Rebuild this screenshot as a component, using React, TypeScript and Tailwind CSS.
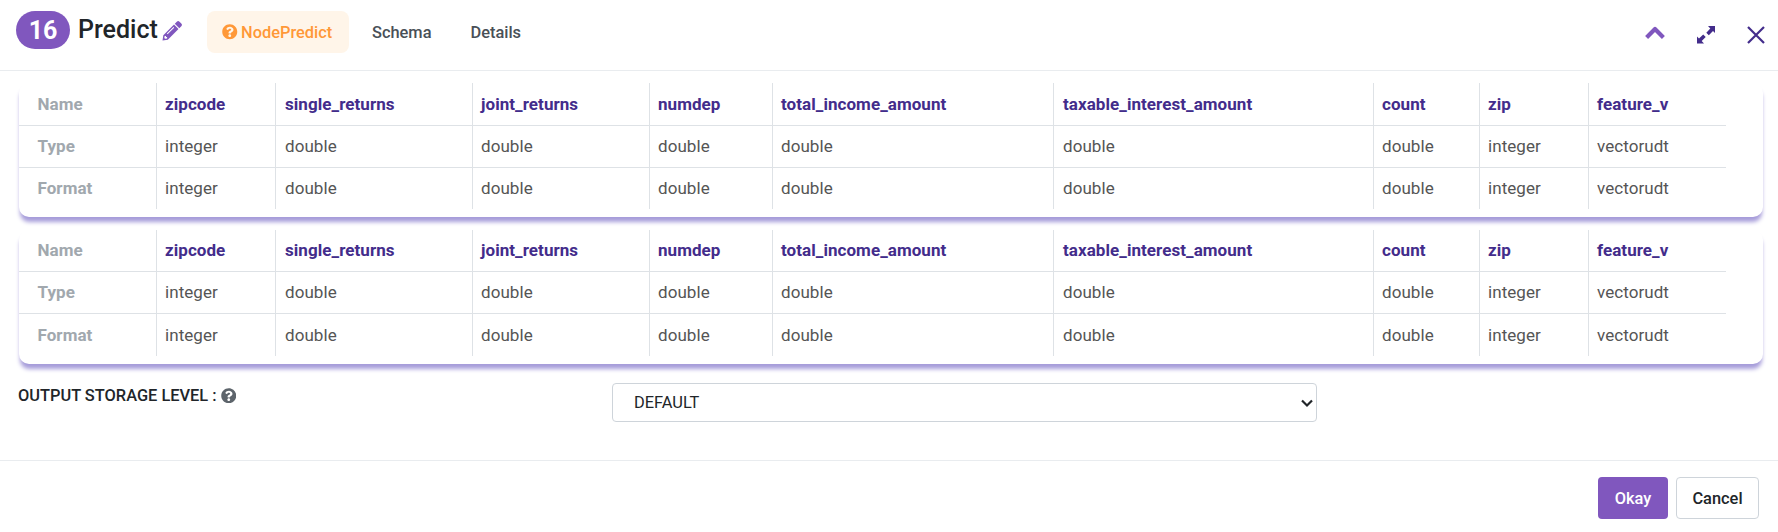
import React from "react";
import { FaQuestionCircle } from "react-icons/fa";

type Column = { name: string; type: string; format: string; pad: string };

const columns: Column[] = [
  { name: "zipcode", type: "integer", format: "integer", pad: "pl-2" },
  { name: "single_returns", type: "double", format: "double", pad: "pl-[9px]" },
  { name: "joint_returns", type: "double", format: "double", pad: "pl-2" },
  { name: "numdep", type: "double", format: "double", pad: "pl-2" },
  { name: "total_income_amount", type: "double", format: "double", pad: "pl-2" },
  { name: "taxable_interest_amount", type: "double", format: "double", pad: "pl-[9px]" },
  { name: "count", type: "double", format: "double", pad: "pl-2" },
  { name: "zip", type: "integer", format: "integer", pad: "pl-2" },
  { name: "feature_v", type: "vectorudt", format: "vectorudt", pad: "pl-2" },
];

const rows: { label: string; key: "name" | "type" | "format" }[] = [
  { label: "Name", key: "name" },
  { label: "Type", key: "type" },
  { label: "Format", key: "format" },
];

const inputRows = ["h-[43px] *:pt-[8.5px]", "h-[42px] *:pt-[7.5px]", "h-[41px] *:pt-[7.5px]"];
const outputRows = ["h-[42px] *:pt-[7.5px]", "h-[42px] *:pt-[7.5px]", "h-[42px] *:pt-[8.5px]"];

function SchemaTable({ rowClasses }: { rowClasses: string[] }) {
  return (
    <div className="h-[134px] rounded-[10px] bg-white text-[17px] leading-6 tracking-[0.06px] shadow-[0_5.5px_4px_-1px_#a69cda]">
      <div className="w-[1707px]">
        {rows.map((row, r) => (
          <div
            key={row.key}
            className={
              "grid grid-cols-[138px_119px_197px_177px_123px_281px_320px_106px_109px_137px] " + rowClasses[r]
            }
          >
            <div
              className={
                "border-r border-[#dee2e6] pl-[18.5px] font-bold text-[#a1a8ae] " + (r < 2 ? "border-b" : "")
              }
            >
              {row.label}
            </div>
            {columns.map((column, c) => (
              <div
                key={column.name}
                className={
                  "border-[#dee2e6] " +
                  column.pad +
                  (r < 2 ? " border-b" : "") +
                  (c < columns.length - 1 ? " border-r" : "") +
                  (row.key === "name" ? " font-bold text-[#432c8b]" : " text-[#555]")
                }
              >
                {column[row.key]}
              </div>
            ))}
          </div>
        ))}
      </div>
    </div>
  );
}

function PencilIcon() {
  return (
    <svg className="h-5 w-5" viewBox="0 0 20 20" fill="#8057be">
      <path
        fillRule="evenodd"
        d="M14.8 0.7a1.9 1.9 0 0 1 2.7 0l1.8 1.8a1.9 1.9 0 0 1 0 2.7L17.3 7.2 12.8 2.7ZM12 3.5 16.5 8 5.8 18.7 0.5 19.6 1.3 14.2ZM11.5 6 4.9 12.6 5.6 13.3 12.2 6.7ZM2.7 15 2.3 17l0.8 0.8 2-0.4v-1.3H4v-1.1Z"
      />
    </svg>
  );
}

export default function App() {
  return (
    <div className="flex h-[532px] flex-col bg-white font-[Roboto,sans-serif] text-[16.4px] leading-6 text-[#212529]">
      <header className="flex h-[71px] items-start border-b border-[#e9ecef] pl-4 pt-[11px]">
        <span className="flex h-[38px] w-[54px] items-center justify-center rounded-full bg-[#8057be] pt-px text-[25px] font-bold text-white">
          16
        </span>
        <h1 className="ml-2 flex h-[38px] w-[84px] items-center pb-px text-[25px] font-medium">Predict</h1>
        <span className="mt-[10px]">
          <PencilIcon />
        </span>
        <nav className="ml-[25px] flex h-[42px] items-center font-medium text-[#495057]">
          <a className="flex h-[42px] w-[142px] items-center gap-[3.5px] rounded-lg bg-[#fff5e9] pl-[15px] text-[#ff9838]">
            <FaQuestionCircle size={15.5} />
            <span className="pt-px">NodePredict</span>
          </a>
          <a className="ml-[23px] pt-px">Schema</a>
          <a className="ml-[39px] pt-px">Details</a>
        </nav>
        <div className="ml-auto flex items-start pr-[13px] pt-[15px]">
          <svg className="mr-[32px] h-[14px] w-[20px]" viewBox="0 0 20 14" fill="none" stroke="#8057be" strokeWidth="4.2">
            <path d="M1.6 11.4 10 3 18.4 11.4" strokeLinejoin="round" />
          </svg>
          <svg className="mr-[32px] h-[18px] w-[18px]" viewBox="0 0 18 18" fill="#432c8b">
            <path d="M11 0H18v7l-2-2-4.2 4.2-2.5-2.5 4-4.2Z" />
            <path d="M7 17.6H0v-7l2 2 4.2-4.2 2.5 2.5-4 4.2Z" />
          </svg>
          <svg className="h-[18px] w-[18px]" viewBox="0 0 18 18" fill="none" stroke="#432c8b" strokeWidth="2.2">
            <path d="M1 1 17 17M17 1 1 17" />
          </svg>
        </div>
      </header>
      <main className="flex h-[389px] flex-col gap-[13px] pl-[19px] pr-[15px] pt-3">
        <SchemaTable rowClasses={inputRows} />
        <SchemaTable rowClasses={outputRows} />
        <div className="flex">
          <div className="-ml-px mt-[7px] flex h-6 w-[594px] items-center gap-1 font-medium">
            OUTPUT STORAGE LEVEL :
            <FaQuestionCircle size={15.5} color="#5d646b" className="-mt-px" />
          </div>
          <div className="mt-[6px] flex h-[39px] w-[705px] items-center justify-between rounded border border-[#ced4da] pl-[21px] pr-[3px]">
            DEFAULT
            <svg className="h-3 w-3" viewBox="0 0 12 12" fill="none" stroke="#212529" strokeWidth="2.2">
              <path d="M1 3.5 6 8.5 11 3.5" />
            </svg>
          </div>
        </div>
      </main>
      <footer className="flex h-[72px] items-start justify-end gap-2 border-t border-[#e9ecef] pr-[19px] pt-4 font-medium">
        <button className="h-[42px] w-[70px] rounded bg-[#8057be] pt-px text-white">Okay</button>
        <button className="h-[42px] w-[83px] rounded border border-[#ced4da] pt-px">Cancel</button>
      </footer>
    </div>
  );
}
